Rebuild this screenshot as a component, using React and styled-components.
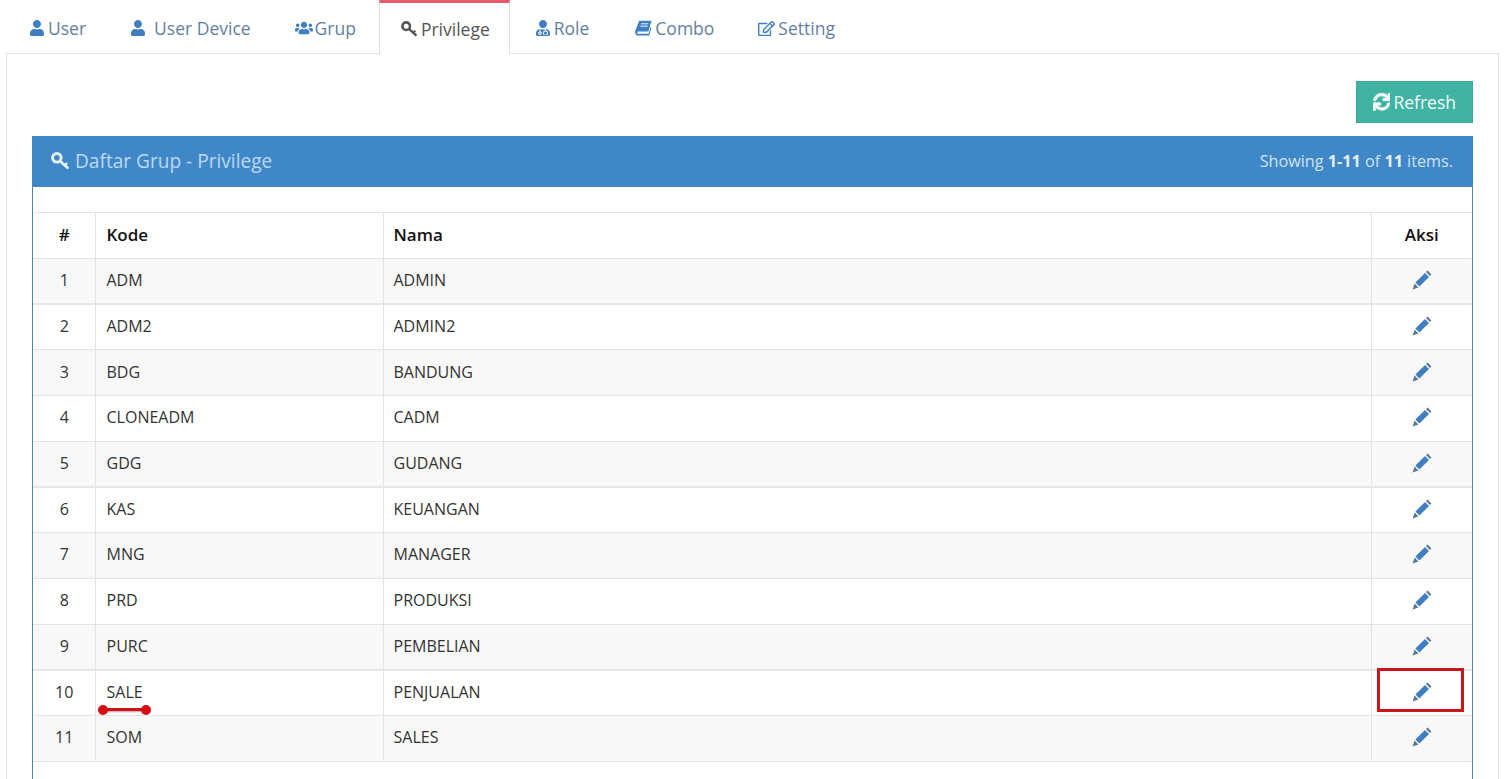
import styled, { createGlobalStyle } from 'styled-components';
import { FaUser, FaUsers, FaUserMd, FaRegEdit, FaSync } from 'react-icons/fa';

const GlobalStyle = createGlobalStyle`
  html, body {
    margin: 0;
    height: 779px;
    overflow: hidden;
    background: #fff;
  }
  body {
    font-family: 'Open Sans', 'Liberation Sans', sans-serif;
    font-size: 16px;
    color: #333;
  }
`;

const Page = styled.div`
  padding: 0 7px 0 6px;
`;

const TabBar = styled.ul`
  display: flex;
  gap: 2px;
  height: 53px;
  margin: 0;
  padding: 0 0 0 2px;
  list-style: none;
`;

const Tab = styled.li`
  display: flex;
  align-items: center;
  gap: ${({ $gap }) => $gap ?? 3}px;
  height: ${({ $active }) => ($active ? 54 : 53)}px;
  padding: 0 ${({ $active }) => ($active ? 19 : 20)}px 0 ${({ $active, $padLeft }) => $padLeft ?? ($active ? 21 : 20)}px;
  box-sizing: border-box;
  font-size: 17.5px;
  color: ${({ $active }) => ($active ? '#555' : '#64809f')};
  background: ${({ $active }) => ($active ? '#fff' : 'transparent')};
  position: relative;
  z-index: ${({ $active }) => ($active ? 1 : 0)};
  border-top: 3px solid ${({ $active }) => ($active ? '#e8596a' : 'transparent')};
  border-left: 1px solid ${({ $active }) => ($active ? '#ddd' : 'transparent')};
  border-right: 1px solid ${({ $active }) => ($active ? '#ddd' : 'transparent')};

  svg {
    color: ${({ $active }) => ($active ? '#555' : '#3f7fc1')};
    font-size: ${({ $iconSize }) => $iconSize ?? 16}px;
  }
`;

const Content = styled.div`
  border: 1px solid #e2e2e2;
  padding: 27px 25px 0;
  height: 800px;
  box-sizing: border-box;
`;

const Toolbar = styled.div`
  display: flex;
  justify-content: flex-end;
  margin-bottom: 13px;
`;

const RefreshButton = styled.button`
  display: flex;
  align-items: center;
  gap: 3px;
  width: 117px;
  height: 42px;
  justify-content: center;
  border: 1px solid #3aa99a;
  background: #40b3a3;
  color: #f2fbfa;
  font-family: inherit;
  font-size: 17.5px;
  padding: 0;
`;

const Panel = styled.section`
  border-left: 1px solid #4b8ca5;
  border-right: 1px solid #4b8ca5;
  height: 700px;
`;

const PanelHeading = styled.header`
  display: flex;
  align-items: center;
  justify-content: space-between;
  height: 51px;
  margin: 0 -1px;
  padding: 0 20px 2px 19px;
  box-sizing: border-box;
  background: #4087c7;
  color: #bcd8f1;
`;

const PanelTitle = styled.h3`
  display: flex;
  align-items: center;
  gap: 6px;
  margin: 0;
  font-size: 19.1px;
  font-weight: 400;

  svg {
    color: #e8f1f9;
  }
`;

const Summary = styled.div`
  font-size: 16.2px;
  color: #cfe3f5;

  b {
    font-weight: 700;
    color: #e6f0f9;
  }
`;

const PanelBody = styled.div`
  padding-top: 25px;
`;

const Table = styled.table`
  width: 100%;
  border-collapse: collapse;
  table-layout: fixed;
  font-size: 16px;
`;

const Row = styled.tr`
  height: 45.7px;
  background: ${({ $striped }) => ($striped ? '#f8f8f8' : '#fff')};

  td {
    border-bottom: ${({ $thick }) => ($thick ? '2px solid #e6e6e6' : '1px solid #e3e3e3')};
  }
`;

const HeadCell = styled.th`
  height: 46px;
  padding: 0 10px 2px;
  box-sizing: border-box;
  font-size: 17px;
  font-weight: 600;
  color: #111;
  text-align: ${({ $center }) => ($center ? 'center' : 'left')};
  border: 1px solid #e3e3e3;
  width: ${({ $width }) => ($width ? `${$width}px` : 'auto')};

  &:first-child {
    border-left: 0;
    padding-left: 11px;
  }
  &:nth-child(2) {
    padding-left: 11px;
  }
  &:last-child {
    border-right: 0;
  }
`;

const Cell = styled.td`
  padding: 0 10px 2px;
  color: #333;
  text-align: ${({ $center }) => ($center ? 'center' : 'left')};
  border: 1px solid #e3e3e3;
  position: relative;

  &:first-child {
    border-left: 0;
    padding-left: 11px;
  }
  &:nth-child(2) {
    padding-left: 11px;
  }
  &:last-child {
    border-right: 0;
  }
`;

const ActionIcon = styled.svg`
  display: block;
  width: 20px;
  height: 20px;
  margin: 0 auto;
`;

const Underline = styled.span`
  position: absolute;
  left: 6px;
  top: 37px;
  width: 45px;
  height: 3px;
  background: #d40f14;
  box-shadow: 1px 1px 2px rgba(0, 0, 0, 0.35);

  &::before,
  &::after {
    content: '';
    position: absolute;
    top: -3px;
    width: 10px;
    height: 10px;
    border-radius: 50%;
    background: #d40f14;
  }
  &::before {
    left: -4px;
  }
  &::after {
    right: -4px;
  }
`;

const Highlight = styled.span`
  position: absolute;
  left: 5px;
  top: -3px;
  width: 81px;
  height: 38px;
  border: 3px solid #cc1419;
`;

// glyph-style key, ring at top left
const KeyIcon = ({ size = 16 }) => (
  <svg width={size} height={size} viewBox="0 0 16 16" fill="none" stroke="currentColor">
    <circle cx="5.2" cy="5.2" r="3.8" strokeWidth="2.6" />
    <path d="M8.2 8.2 L15.4 14.6" strokeWidth="2.4" />
    <path d="M12.2 11.8 L14.4 9.8" strokeWidth="2" />
  </svg>
);

// slanted book
const BookIcon = () => (
  <svg width="17" height="16" viewBox="0 0 17 16">
    <path
      fill="currentColor"
      d="M4.2 0.8 H16.6 L13.4 11.6 H3.2 C2 11.6 1.8 13.8 3.4 13.8 H13.6 L15.6 7 L16.4 8 L14.2 15.4 H3 C0.6 15.4 -0.4 13 0.4 10.6 Z"
    />
    <path stroke="#fff" strokeWidth="0.9" d="M6 3.8 H13.4 M5.3 6.2 H12.7" />
  </svg>
);

const PencilIcon = () => (
  <ActionIcon viewBox="0 0 20 20">
    <path fill="#3f7fc1" d="M3.4 12.6 L13 3 L17 7 L7.4 16.6 Z" />
    <path fill="#5b7691" d="M14 2 L15.6 0.6 L19.4 4.4 L18 6 Z M2.6 13.6 L6.4 17.4 L0.6 19.4 Z" />
  </ActionIcon>
);

const rows = [
  ['ADM', 'ADMIN'],
  ['ADM2', 'ADMIN2'],
  ['BDG', 'BANDUNG'],
  ['CLONEADM', 'CADM'],
  ['GDG', 'GUDANG'],
  ['KAS', 'KEUANGAN'],
  ['MNG', 'MANAGER'],
  ['PRD', 'PRODUKSI'],
  ['PURC', 'PEMBELIAN'],
  ['SALE', 'PENJUALAN'],
  ['SOM', 'SALES'],
];

const App = () => (
  <Page>
    <GlobalStyle />
    <TabBar>
      <Tab><FaUser />User</Tab>
      <Tab $gap={8}><FaUser />User Device</Tab>
      <Tab $iconSize={18} $gap={2}><FaUsers />Grup</Tab>
      <Tab $active $gap={4}><KeyIcon />Privilege</Tab>
      <Tab $padLeft={22}><FaUserMd />Role</Tab>
      <Tab $padLeft={22}><BookIcon />Combo</Tab>
      <Tab $iconSize={17}><FaRegEdit />Setting</Tab>
    </TabBar>
    <Content>
      <Toolbar>
        <RefreshButton><FaSync stroke="currentColor" strokeWidth={24} />Refresh</RefreshButton>
      </Toolbar>
      <Panel>
        <PanelHeading>
          <PanelTitle><KeyIcon size={18} />Daftar Grup - Privilege</PanelTitle>
          <Summary>Showing <b>1-11</b> of <b>11</b> items.</Summary>
        </PanelHeading>
        <PanelBody>
          <Table>
            <thead>
              <tr>
                <HeadCell $center $width={62}>#</HeadCell>
                <HeadCell $width={288}>Kode</HeadCell>
                <HeadCell>Nama</HeadCell>
                <HeadCell $center $width={101}>Aksi</HeadCell>
              </tr>
            </thead>
            <tbody>
              {rows.map(([kode, nama], i) => (
                <Row key={kode} $striped={i % 2 === 0} $thick={i === 0 || i === 4 || i === 8}>
                  <Cell $center>{i + 1}</Cell>
                  <Cell>
                    {kode}
                    {kode === 'SALE' && <Underline />}
                  </Cell>
                  <Cell>{nama}</Cell>
                  <Cell>
                    <PencilIcon />
                    {kode === 'SALE' && <Highlight />}
                  </Cell>
                </Row>
              ))}
            </tbody>
          </Table>
        </PanelBody>
      </Panel>
    </Content>
  </Page>
);

export default App;
